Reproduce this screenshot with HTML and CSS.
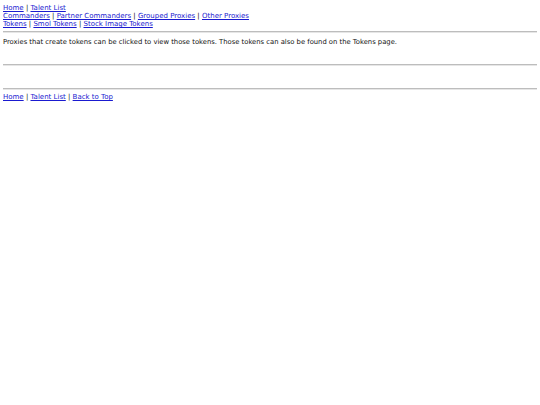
FILE: index.html
```html
<!DOCTYPE html>
<html>
<head>
<meta charset="utf-8">
<link rel="stylesheet" href="styles.css">
</head>
<body>
<div class="nav top">
<a href="#">Home</a> | <a href="#">Talent List</a><br>
<a href="#">Commanders</a> | <a href="#">Partner Commanders</a> | <a href="#">Grouped Proxies</a> | <a href="#">Other Proxies</a><br>
<a href="#">Tokens</a> | <a href="#">Smol Tokens</a> | <a href="#">Stock Image Tokens</a>
</div>
<hr class="rule rule-top">
<p class="note">Proxies that create tokens can be clicked to view those tokens. Those tokens can also be found on the Tokens page.</p>
<hr class="rule rule-mid">
<div class="gallery"></div>
<hr class="rule rule-bottom">
<div class="nav">
<a href="#">Home</a> | <a href="#">Talent List</a> | <a href="#">Back to Top</a>
</div>
</body>
</html>
```
FILE: styles.css
```css
body {
  margin: 3px;
  font-family: "DejaVu Sans", Verdana, sans-serif;
  font-size: 7px;
  color: #111;
  background: #fff;
}
a { color: #1a1ad0; }
.nav { line-height: 8px; }
.nav.top { padding-top: 1px; }
.rule {
  border: none;
  border-top: 1px solid #bdbdbd;
  border-bottom: 1px solid #e6e6e6;
  margin: 0;
}
.rule-top { margin-top: 3px; }
.note {
  margin: 5px 0 18px;
  font-size: 6.8px;
  line-height: 8px;
}
.gallery { height: 22px; }
.rule-bottom { margin-bottom: 3px; }
```
